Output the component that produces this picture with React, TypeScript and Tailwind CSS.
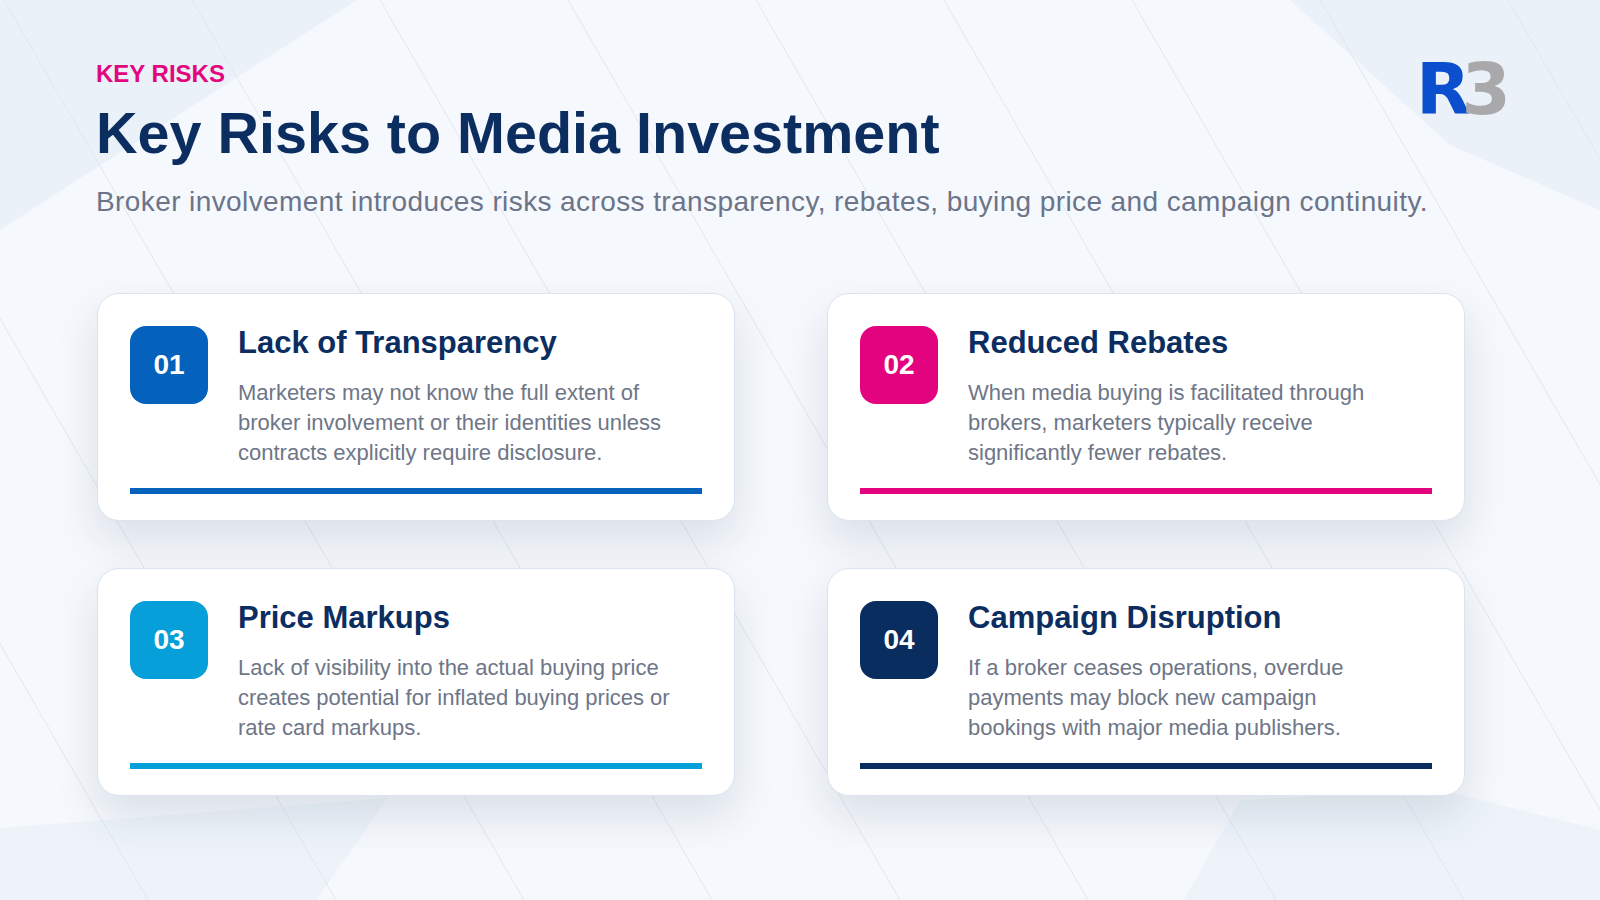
import React from 'react';

type Risk = {
  num: string;
  title: string;
  body: string;
  badge: string;
  bar: string;
};

const risks: Risk[] = [
  {
    num: '01',
    title: 'Lack of Transparency',
    body: 'Marketers may not know the full extent of broker involvement or their identities unless contracts explicitly require disclosure.',
    badge: 'bg-[#0462bd]',
    bar: 'bg-[#0462bd]',
  },
  {
    num: '02',
    title: 'Reduced Rebates',
    body: 'When media buying is facilitated through brokers, marketers typically receive significantly fewer rebates.',
    badge: 'bg-[#e4037f]',
    bar: 'bg-[#e4037f]',
  },
  {
    num: '03',
    title: 'Price Markups',
    body: 'Lack of visibility into the actual buying price creates potential for inflated buying prices or rate card markups.',
    badge: 'bg-[#079fda]',
    bar: 'bg-[#079fda]',
  },
  {
    num: '04',
    title: 'Campaign Disruption',
    body: 'If a broker ceases operations, overdue payments may block new campaign bookings with major media publishers.',
    badge: 'bg-[#0a2d60]',
    bar: 'bg-[#0a2d60]',
  },
];

// decorative backdrop: faint facets + thin diagonal hairlines
const Backdrop = () => {
  const lines = [];
  for (let x = -560; x < 1700; x += 188) lines.push(x);
  return (
    <svg className="absolute inset-0" width="1600" height="900" viewBox="0 0 1600 900">
      <polygon points="0,0 357,0 0,230" fill="#eaf1f9" />
      <polygon points="1290,0 1450,145 1600,210 1600,0" fill="#eaf1f9" />
      <polygon points="0,828 388,798 316,900 0,900" fill="#edf3f9" />
      <polygon points="1240,800 1440,790 1600,830 1600,900 1184,900" fill="#edf3f9" />
      {lines.map(x => (
        <line key={x} x1={x} y1={0} x2={x + 520} y2={900} stroke="#e1e7ef" strokeWidth={1} />
      ))}
    </svg>
  );
};

const Logo = () => (
  <div className="flex items-start leading-none text-[71px] font-bold font-['DejaVu_Sans',sans-serif] mt-[-8px] mr-[-3px]">
    <span className="text-[#0b4fcf]">R</span>
    <span className="text-[#a9a9ab] ml-[-9px]">3</span>
  </div>
);

const RiskCard = ({ risk }: { risk: Risk }) => (
  <div className="bg-white rounded-[22px] border border-[#dbe4ee] shadow-[0_20px_44px_rgba(30,55,90,0.12)] pt-[32px] px-[32px] pb-[26px]">
    <div className="flex gap-[30px]">
      <div
        className={`${risk.badge} w-[78px] h-[78px] shrink-0 rounded-[16px] flex items-center justify-center text-white text-[28px] font-bold`}
      >
        {risk.num}
      </div>
      <div className="flex-1">
        <h3 className="mt-[1px] text-[31px] leading-none font-bold text-[#0b2d5f]">{risk.title}</h3>
        <p className="mt-[20px] w-[438px] text-[22px] leading-[30px] text-[#6e7687]">{risk.body}</p>
      </div>
    </div>
    <div className={`${risk.bar} h-[6px] mt-[20px]`} />
  </div>
);

export default function App() {
  return (
    <div className="relative w-[1600px] h-[900px] overflow-hidden bg-[#f5f8fc] font-['Liberation_Sans',Arial,sans-serif]">
      <Backdrop />
      <div className="relative">
        <header className="pl-[96px] pr-[92px] pt-[62px]">
          <div className="flex justify-between items-start">
            <div>
              <p className="text-[24px] leading-none font-bold text-[#e2067f]">KEY RISKS</p>
              <h1 className="mt-[19px] text-[57.5px] leading-none font-bold text-[#0b2d5f]">
                Key Risks to Media Investment
              </h1>
            </div>
            <Logo />
          </div>
          <p className="mt-[25px] whitespace-nowrap text-[28px] leading-none tracking-[0.4px] text-[#6b7489]">
            Broker involvement introduces risks across transparency, rebates, buying price and campaign continuity.
          </p>
        </header>
        <div className="ml-[97px] mt-[77px] w-[1368px] grid grid-cols-2 gap-x-[92px] gap-y-[47px]">
          {risks.map(r => (
            <RiskCard key={r.num} risk={r} />
          ))}
        </div>
      </div>
    </div>
  );
}
